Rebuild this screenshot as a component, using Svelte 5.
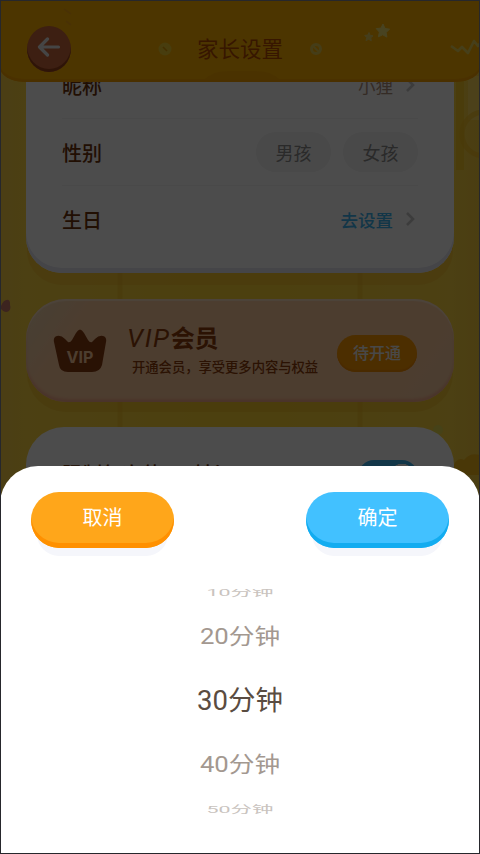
<script lang="ts">
	const genders = ['男孩', '女孩'];

	const options = [
		{ label: '10分钟', pos: 'far' },
		{ label: '20分钟', pos: 'near' },
		{ label: '30分钟', pos: 'current' },
		{ label: '40分钟', pos: 'near' },
		{ label: '50分钟', pos: 'far' }
	];
</script>

{#snippet chevron()}
	<svg class="chevron" viewBox="0 0 10 16" width="10" height="16">
		<path d="M2 2l6 6-6 6" fill="none" stroke="#c8c8c8" stroke-width="2.6" />
	</svg>
{/snippet}

<div class="screen">
	<svg class="backdrop" viewBox="0 0 480 854" width="480" height="854">
		<rect x="456" y="80" width="8" height="90" fill="#f5b800" opacity="0.4" />
		<rect x="468" y="76" width="11" height="44" fill="#ffe16a" opacity="0.6" />
		<path d="M120 240v210M360 240v210" stroke="#eeb61a" stroke-width="5" opacity="0.4" />
		<circle cx="484" cy="134" r="22" fill="none" stroke="#f5bd1a" stroke-width="5" opacity="0.6" />
		<path d="M1 306c3-8 10-8 9-1 2 6-4 10-9 4z" fill="#c87868" />
		<circle cx="438" cy="430" r="5" fill="#e9dc50" />
		<path d="M452 470q4-14 12-10 6-8 16-5v20h-28z" fill="#f2a800" opacity="0.6" />
	</svg>

	<header>
		<button class="back" aria-label="返回">
			<svg viewBox="0 0 24 20" width="24" height="20">
				<path d="M10.5 2L2.5 10l8 8M3 10h18.5" fill="none" stroke="#e8e8e8" stroke-width="3.2" stroke-linecap="round" stroke-linejoin="round" />
			</svg>
		</button>
		<h1>家长设置</h1>
		<svg class="decor" viewBox="0 0 480 82" width="480" height="82">
			<circle cx="165" cy="49" r="6.5" fill="#f0cc30" />
			<path d="M163 47l4 4" stroke="#e29b00" stroke-width="1.6" />
			<circle cx="316" cy="49" r="4.5" fill="none" stroke="#e8cc50" stroke-width="3" />
			<path d="M313 46l6 6" stroke="#e8cc50" stroke-width="2" />
			<path d="M383 24l2 4.4 4.6.8-3.5 3.2.8 4.7-4.2-2.3-4.3 2 1-4.7-3.2-3.5 4.7-.5z" fill="#f0e070" stroke="#f0e070" stroke-linejoin="round" />
			<path d="M369 32.500l1 2.800 3 .5-2.200 2 .5 3-2.600-1.500-2.700 1.300.7-3-2-2.200 3-.3z" fill="#e8d060" stroke="#e8d060" />
			<path d="M451 46l7 5 4-4 6 6 6-12 4 5 4-5" fill="none" stroke="#ecd458" stroke-width="2.6" stroke-linejoin="round" />
			<path d="M64 9l7 5M66 21l5 4" stroke="#ef9d1c" stroke-width="2" opacity="0.6" />
			<path d="M205 79q8-8 22-8h30q14 0 22 8z" fill="#f09a00" opacity="0.4" />
		</svg>
	</header>

	<main>
		<section class="card profile">
			<div class="row">
				<span class="label">昵称</span>
				<span class="value">小狸{@render chevron()}</span>
			</div>
			<div class="row">
				<span class="label">性别</span>
				<div class="pills">
					{#each genders as gender}
						<button class="pill">{gender}</button>
					{/each}
				</div>
			</div>
			<div class="row">
				<span class="label">生日</span>
				<span class="value link">去设置{@render chevron()}</span>
			</div>
		</section>

		<section class="vip">
			<svg class="crown" viewBox="0 0 54 44" width="54" height="44">
				<path d="M4 7q4-1 8 3l3 3q2 1 4-2l4-7q4-7 8 0l4 7q2 3 4 2l3-3q4-4 8-3 4 1 3 6l-4 23q-2 7-10 7H15q-8 0-9-7L1 13q-1-5 3-6z" fill="#8a3c10" />
				<text x="27" y="34" text-anchor="middle">VIP</text>
			</svg>
			<div class="vip-text">
				<h2><i>VIP</i>会员</h2>
				<p>开通会员，享受更多内容与权益</p>
			</div>
			<button class="open">待开通</button>
		</section>

		<section class="card limits">
			<span class="label">限制每次使用时长</span>
			<span class="switch"></span>
		</section>
	</main>

	<div class="mask"></div>

	<div class="sheet">
		<div class="actions">
			<button class="btn cancel">取消</button>
			<button class="btn confirm">确定</button>
		</div>
		<div class="picker">
			{#each options as option}
				<div class="option {option.pos}"><span>{option.label}</span></div>
			{/each}
		</div>
	</div>
	<div class="frame"></div>
</div>

<style>
	:global(body) {
		margin: 0;
	}

	.screen {
		position: relative;
		width: 480px;
		height: 854px;
		overflow: hidden;
		background: linear-gradient(90deg, #fbcf45 0, #fdd640 26px, #ffd832 50%, #fdd640 450px, #f9ce3f 100%);
		font-family: Roboto, 'Noto Sans CJK SC', sans-serif;
	}

	.screen * {
		box-sizing: border-box;
	}

	button {
		border: none;
		padding: 0;
		font-family: inherit;
	}

	h1,
	h2,
	p {
		margin: 0;
	}

	.backdrop,
	.decor,
	.mask,
	.frame {
		position: absolute;
		inset: 0;
	}

	header {
		position: relative;
		z-index: 1;
		display: flex;
		align-items: center;
		height: 82px;
		padding: 17px 27px 0;
		border-radius: 0 0 24px 24px / 0 0 15px 15px;
		background: #ffb300;
		box-shadow: inset 0 -3px 1px #f8a200;
	}

	.back {
		display: flex;
		align-items: center;
		justify-content: center;
		width: 44px;
		height: 46px;
		padding-bottom: 4px;
		margin-top: -1px;
		border-radius: 50%;
		background: #cc683c;
		box-shadow: inset 0 -3px 0 #9c441c;
	}

	h1 {
		flex: 1;
		margin-right: 44px;
		font-size: 21.5px;
		font-weight: 400;
		line-height: 30px;
		text-align: center;
		color: #b84c00;
	}

	main {
		position: relative;
		padding: 0 26px;
	}

	.card {
		background: #fff;
	}

	.profile {
		display: flow-root;
		height: 191px;
		padding: 0 36px;
		margin-bottom: 26px;
		border-radius: 0 0 36px 36px;
		box-shadow: inset 0 -5px 0 #e6e6f0, 0 13px 0 -1px #f5b52466;
	}

	.row {
		display: flex;
		align-items: center;
		justify-content: space-between;
		height: 67px;
		border-bottom: 1px solid #f4f4f4;
	}

	.row:first-child {
		margin-top: -30px;
	}

	.row:last-child {
		height: 66px;
		border-bottom: none;
	}

	.label {
		font-size: 20px;
		font-weight: 500;
		color: #6e340a;
	}

	.value {
		display: flex;
		align-items: center;
		gap: 12px;
		padding-right: 3px;
		font-size: 17.5px;
		color: #b0907c;
	}

	.value.link {
		font-weight: 500;
		color: #3eb5f2;
	}

	.pills {
		display: flex;
		gap: 12px;
	}

	.pill {
		width: 75px;
		height: 40px;
		border-radius: 20px;
		background: #f4f4f4;
		font-size: 18px;
		color: #8c8c8c;
	}

	.vip {
		display: flex;
		align-items: center;
		height: 103px;
		padding: 0 38px 0 27px;
		margin-bottom: 25px;
		border-radius: 40px;
		background: linear-gradient(125deg, #ecd5b0 0, #ffcc9e 14%, #ffcc9e 85%, #f8cfa4 100%);
		box-shadow: inset 0 2px 1px #ffe2c4, inset 0 -3px 3px #f8ac8c, 0 11px 0 -1px #f0b41e66;
	}

	.crown text {
		font-family: Inter, sans-serif;
		font-size: 16px;
		font-weight: 700;
		fill: #ffcc9e;
	}

	.vip-text {
		margin-left: 20px;
	}

	h2 {
		font-size: 24px;
		font-weight: 700;
		line-height: 32px;
		color: #913f0a;
	}

	h2 i {
		font-size: 26px;
		font-weight: 400;
		letter-spacing: 1.6px;
	}

	p {
		padding-left: 5px;
		margin-top: 2px;
		font-size: 13.300px;
		font-weight: 500;
		line-height: 22px;
		white-space: nowrap;
		color: #913f0a;
	}

	.open {
		width: 80px;
		height: 37px;
		padding-bottom: 2px;
		margin: 5px -1px 0 auto;
		border-radius: 19px;
		background: #ff9a00;
		box-shadow: inset 0 -2px 1px #f68c00;
		font-size: 16px;
		font-weight: 500;
		color: #f2f2f2;
	}

	.limits {
		display: flex;
		justify-content: space-between;
		align-items: flex-start;
		height: 430px;
		padding: 33px 36px 0;
		border-radius: 38px;
	}

	.limits .label {
		line-height: 31px;
	}

	.switch {
		width: 60px;
		height: 32px;
		border-radius: 16px;
		background: radial-gradient(circle at 44px 16px, #fff 12px, transparent 12.5px), #3eb5f2;
	}

	.mask {
		z-index: 2;
		background: rgba(0, 0, 0, 0.7);
	}

	.sheet {
		position: absolute;
		z-index: 3;
		left: 0;
		right: 0;
		bottom: 0;
		height: 388px;
		padding: 26px 31px 0;
		border-radius: 38px 38px 0 0;
		background: #fff;
	}

	.actions {
		display: flex;
		justify-content: space-between;
	}

	.btn {
		width: 143px;
		height: 56px;
		padding-bottom: 7px;
		border-radius: 28px;
		font-size: 20px;
		color: #fff;
	}

	.cancel {
		background: #ffa61a;
		box-shadow: inset 0 -5px 0 #ff9000, 0 14px 0 -6px #f5f6fb;
	}

	.confirm {
		background: #42c1ff;
		box-shadow: inset 0 -5px 0 #12acf0, 0 14px 0 -6px #f5f6fb;
	}

	.picker {
		display: flex;
		flex-direction: column;
		height: 228px;
		margin-top: 41px;
		overflow: hidden;
	}

	.option {
		display: flex;
		flex: none;
		align-items: center;
		justify-content: center;
		height: 64px;
		line-height: 1;
		white-space: nowrap;
		color: #5a4c41;
	}

	.current {
		font-size: 27.500px;
	}

	.near {
		font-size: 25.700px;
		color: #a39890;
	}

	.near span {
		transform: scaleY(0.84);
	}

	.far {
		height: 26px;
		font-size: 21.500px;
		color: #c9c3be;
	}

	.far:first-child {
		height: 16px;
		margin-top: -4px;
		margin-bottom: 4px;
	}

	.far span {
		transform: scaleY(0.46);
	}

	/* thin dark bezel round the whole screen */
	.frame {
		z-index: 4;
		border: 1px solid #26272c;
		pointer-events: none;
	}
</style>
